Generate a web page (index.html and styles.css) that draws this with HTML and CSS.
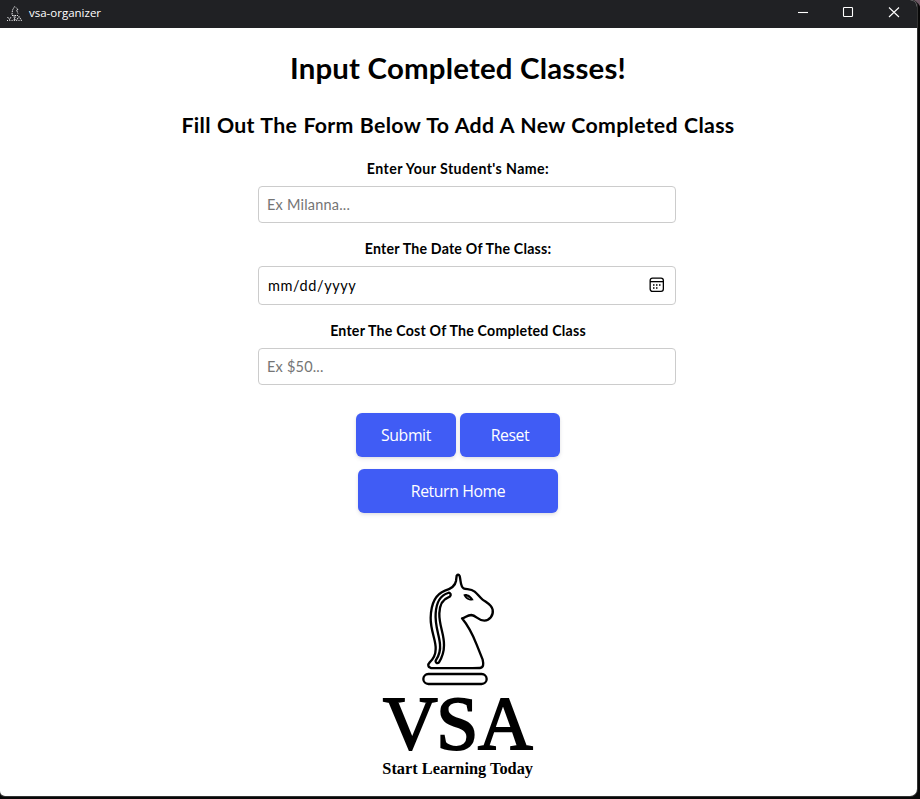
FILE: index.html
```html
<!DOCTYPE html>
<html lang="en">
<head>
<meta charset="utf-8">
<title>vsa-organizer</title>
<link rel="stylesheet" href="styles.css">
</head>
<body>
<div class="window">
  <header class="titlebar">
    <svg class="app-icon" width="16" height="16" viewBox="0 0 16 16" fill="none" stroke="#e4e4e6" stroke-width="1">
      <path d="M5 9.500 5.500 5 7 2.500 8 1M9 2.500 11 4.500 9.500 5 11 8.500M5 10.500h6" stroke-dasharray="1.600 .8"/>
      <path d="M.5 12 2.500 14.500 4 12M6.500 12h2l-1 1.500 1 1.200h-2M10 14.500l2-3 2 3" stroke-dasharray="2 .6"/>
      <path d="M0 15.500h15" stroke-dasharray="1 1.300"/>
    </svg>
    <span class="app-name">vsa-organizer</span>
    <div class="controls">
      <svg width="46" height="28" viewBox="0 0 46 28"><path d="M18 12.500h10"/></svg>
      <svg width="46" height="28" viewBox="0 0 46 28"><rect x="17.500" y="7.500" width="9" height="9" rx=".8"/></svg>
      <svg width="46" height="28" viewBox="0 0 46 28"><path d="m17 7.500 10 9.500M27 7.500 17 17"/></svg>
    </div>
  </header>
  <main class="page">
    <h1 class="title">Input Completed Classes!</h1>
    <h2 class="subtitle">Fill Out The Form Below To Add A New Completed Class</h2>
    <form class="form">
      <label class="label label-student" for="student">Enter Your Student's Name:</label>
      <input class="field" id="student" type="text" placeholder="Ex Milanna...">
      <label class="label">Enter The Date Of The Class:</label>
      <div class="field date-field">
        <span>mm/dd/yyyy</span>
        <svg width="16" height="16" viewBox="0 0 16 16" fill="none" stroke="#000" stroke-width="1.300">
          <rect x="1.150" y="1.150" width="13.200" height="13.200" rx="2.300"/>
          <path d="M1 4.650h13.500"/>
          <path d="M4 8h1.500M7 8h1.500M10 8h1.500M4 11h1.500M7 11h1.500" stroke-width="1.500"/>
        </svg>
      </div>
      <label class="label" for="cost">Enter The Cost Of The Completed Class</label>
      <input class="field" id="cost" type="text" placeholder="Ex $50...">
      <div class="actions">
        <button class="button" type="button">Submit</button>
        <button class="button" type="button">Reset</button>
      </div>
    </form>
    <button class="button home" type="button">Return Home</button>
    <svg class="logo" width="180" height="214" viewBox="0 0 540 642">
      <g fill="none" stroke="#000" stroke-width="7" stroke-linejoin="round" stroke-linecap="round">
        <path d="M260 32Q265 26 269 33C273 49 271 65 281 70C291 74 302 71 314 80C324 88 326 94 337 103C350 113 365 119 368 134C371 152 359 166 343 167C324 167 319 151 304 150C291 150 287 158 276 160C291 178 307 206 320 239L338 284C341 297 341 307 330 309Q325 310 183 309C173 307 173 298 179 292C192 280 197 268 197 252C199 228 181 196 182 158C183 119 196 88 225 77C244 71 256 60 258 48Z"/>
        <path d="M239 84C245 88 242 95 235 97C217 103 209 120 208 145C207 181 223 208 222 241C222 265 214 281 207 292C202 297 195 293 197 287C207 272 212 256 210 238C208 211 194 181 197 145C199 111 212 91 234 84Q237 82 239 84Z"/>
        <rect x="160" y="327" width="190" height="30" rx="15"/>
      </g>
      <path d="M280 89C287 84 303 89 311 106C298 108 287 104 280 89Z"/>
      <path d="m290 95 10 6" stroke="#888" stroke-width="3"/>
      <text class="wordmark" x="39 199 324" y="551">VSA</text>
      <text class="tagline" x="37" y="628" textLength="452" lengthAdjust="spacingAndGlyphs">Start Learning Today</text>
    </svg>
  </main>
</div>
</body>
</html>
```

FILE: styles.css
```css
* { box-sizing: border-box; }

body {
  margin: 0;
  height: 799px;
  overflow: hidden;
  background: linear-gradient(#705a66 0, #5d4954 35px, #30303a 40px, #24242b 60px, #050505 100px);
  font-family: Lato, Carlito, sans-serif;
  color: #000;
}

.window {
  width: 917px;
  height: 796px;
  overflow: hidden;
  background: #fff;
  border-radius: 0 7px 7px 5px;
  box-shadow: 0 0 0 1px #333, 0 4px 0 4px #080808;
}

.titlebar {
  display: flex;
  align-items: flex-start;
  height: 28px;
  padding-left: 7px;
  background: #202124;
}

.app-icon { margin-top: 5px; }

.app-name {
  margin-left: 6px;
  font: 11.500px/26px "Open Sans", sans-serif;
  color: #fff;
}

.controls {
  display: flex;
  margin: 0 -1px 0 auto;
  fill: none;
  stroke: #fff;
  stroke-width: 1.100;
}

.page {
  display: flex;
  flex-direction: column;
  align-items: center;
  width: 916px;
  padding-top: 20px;
}

.title {
  margin: 0;
  font-size: 29.400px;
  letter-spacing: .2px;
  line-height: 40px;
}

.subtitle {
  margin: 22px 0 19px;
  font-size: 21.300px;
  letter-spacing: .3px;
  word-spacing: .7px;
  line-height: 30px;
}

.form {
  display: flex;
  flex-direction: column;
  width: 400px;
}

.label {
  margin-bottom: 7px;
  text-align: center;
  font-size: 14.200px;
  font-weight: 700;
  letter-spacing: .2px;
  line-height: 20px;
}

.label-student { letter-spacing: .4px; }

.field {
  flex: none;
  box-sizing: content-box;
  width: 400px;
  height: 19px;
  margin: 0 0 16px;
  padding: 8px;
  border: 1px solid #ccc;
  border-radius: 4px;
  background: #fff;
  font: 14.500px/19px Lato, Carlito, sans-serif;
  letter-spacing: .2px;
}

.field::placeholder { color: #757575; opacity: 1; }

.date-field {
  display: flex;
  justify-content: space-between;
  width: 399px;
  height: 21px;
  padding-left: 9px;
  line-height: 22px;
  letter-spacing: .6px;
}

.date-field svg { margin: 2px 2px 0 0; }

.actions {
  display: flex;
  justify-content: center;
  gap: 4px;
  margin-top: 12px;
}

.button {
  width: 100px;
  height: 44px;
  padding: 0;
  border: 0;
  border-radius: 6px;
  background: #405cf5;
  box-shadow: 0 2px 4px rgba(50, 50, 93, .1), 0 1px 3px rgba(0, 0, 0, .06);
  color: #fff;
  font: 15.800px/44px "Open Sans", sans-serif;
  letter-spacing: -.4px;
}

.home {
  width: 200px;
  margin-top: 12px;
}

.logo { margin: 52px 0 0 4px; }

.wordmark {
  font-family: "Liberation Serif", serif;
  font-size: 227px;
  stroke: #000;
  stroke-width: 6px;
}

.tagline {
  font-family: "Liberation Serif", serif;
  font-size: 47px;
  font-weight: 700;
}
```
